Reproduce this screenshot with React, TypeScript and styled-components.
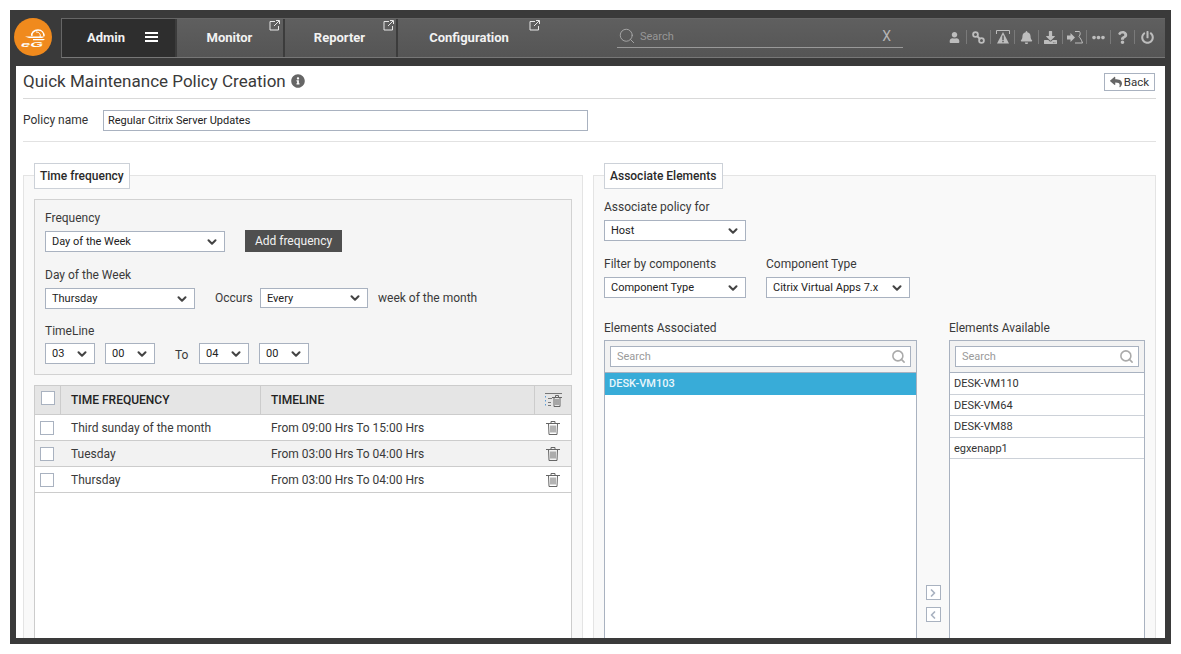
import styled, { createGlobalStyle } from "styled-components";
import {
  FaBell,
  FaDownload,
  FaEllipsisH,
  FaInfoCircle,
  FaPowerOff,
  FaQuestion,
  FaReply,
  FaUser,
} from "react-icons/fa";
import { ChevronDown, ChevronLeft, ChevronRight, Search as SearchGlass } from "lucide-react";

const GlobalStyle = createGlobalStyle`
  html, body {
    margin: 0;
    background: #fff;
    font-family: Roboto, "Liberation Sans", sans-serif;
    color: #333;
  }
  * { box-sizing: border-box; }
`;

const Page = styled.div`
  padding: 10px;
`;

const Frame = styled.div`
  width: 1161px;
  height: 634px;
  background: #3a3a3a;
  border: solid #3a3a3a;
  border-width: 0 6px 6px;
  display: flex;
  flex-direction: column;
`;

/* ---- top bar ---- */
const Header = styled.header`
  height: 56px;
  padding-top: 8px;
  display: flex;
  flex: none;
`;

const LogoSlot = styled.div`
  width: 47px;
  flex: none;
  margin-left: -2px;
`;

const NavBar = styled.nav`
  flex: 1;
  height: 40px;
  display: flex;
  background: linear-gradient(#5f5f5f, #555);
  border: 1px solid #666;
  border-right: none;
  border-bottom-color: #777;
`;

const Tab = styled.a<{ $w: number; $active?: boolean; $last?: boolean; $nudge?: number }>`
  position: relative;
  width: ${(p) => p.$w}px;
  flex: none;
  display: flex;
  align-items: center;
  justify-content: center;
  gap: 20px;
  padding: 0 ${(p) => p.$nudge ?? 0}px 2px ${(p) => (p.$active ? 8 : 0)}px;
  font-size: 13px;
  font-weight: 700;
  color: #f2f2f2;
  border-right: ${(p) => (p.$last ? "none" : "2px solid #3c3c3c")};
  background: ${(p) => (p.$active ? "#2e2e2e" : "transparent")};
`;

const ExternalMark = styled.svg<{ $right: number }>`
  position: absolute;
  top: 1px;
  right: ${(p) => p.$right}px;
  width: 11px;
  height: 11px;
`;

const Hamburger = styled.span`
  width: 13px;
  height: 10px;
  border-top: 2px solid #fff;
  border-bottom: 2px solid #fff;
  position: relative;
  &::after {
    content: "";
    position: absolute;
    left: 0;
    right: 0;
    top: 2px;
    height: 2px;
    background: #fff;
  }
`;

const SearchBar = styled.div`
  width: 286px;
  height: 27px;
  margin: 2px 0 0 76px;
  display: flex;
  align-items: center;
  padding: 3px 12px 0 1px;
  border-bottom: 1px solid #999;
  color: #aaa;
  font-size: 11px;
`;

const SearchHint = styled.span`
  flex: 1;
  margin-left: 4px;
  padding-top: 1px;
  color: #979797;
`;

const ClearMark = styled.span`
  font-size: 14px;
  color: #b5b5b5;
`;

const ToolIcons = styled.div`
  margin-left: auto;
  margin-right: 6px;
  padding-bottom: 2px;
  display: flex;
  align-items: center;
`;

const ToolIcon = styled.span`
  width: 24px;
  height: 14px;
  display: flex;
  align-items: center;
  justify-content: center;
  color: #bdbdbd;
  border-right: 1px solid #7a7a7a;
  &:last-child {
    border-right: none;
  }
`;

/* ---- page ---- */
const Main = styled.main`
  flex: 1;
  min-height: 0;
  background: #fff;
  padding: 0 9px 0 7px;
  display: flex;
  flex-direction: column;
  overflow: hidden;
`;

const TitleRow = styled.div`
  height: 33px;
  flex: none;
  display: flex;
  align-items: center;
  padding-bottom: 3px;
  border-bottom: 1px solid #d9d9d9;
`;

const Title = styled.h1`
  margin: 0;
  font-size: 17px;
  font-weight: 400;
  color: #3a3a3a;
`;

const InfoIcon = styled(FaInfoCircle)`
  margin-left: 5px;
  color: #666;
  font-size: 14px;
`;

const BackButton = styled.button`
  margin: 2px 1px 0 auto;
  width: 51px;
  height: 18px;
  padding: 0;
  background: #fff;
  border: 1px solid #a9b2c0;
  display: flex;
  align-items: center;
  justify-content: center;
  gap: 2px;
  font: 11.5px Roboto, sans-serif;
  color: #333;
  svg {
    color: #666;
    font-size: 12px;
  }
`;

const PolicyRow = styled.div`
  height: 43px;
  flex: none;
  padding-top: 11px;
  display: flex;
  border-bottom: 1px solid #e2e2e2;
`;

const PolicyLabel = styled.label`
  width: 80px;
  font-size: 12px;
  line-height: 21px;
`;

const PolicyInput = styled.div`
  width: 485px;
  height: 21px;
  padding-left: 4px;
  border: 1px solid #a9b2c0;
  font-size: 11px;
  line-height: 19px;
  color: #222;
`;

const Columns = styled.div`
  flex: 1;
  min-height: 0;
  margin-top: 33px;
  display: grid;
  grid-template-columns: 560px 563px;
  gap: 10px;
`;

const Panel = styled.section`
  min-height: 0;
  background: #f9f9f9;
  border: 1px solid #e4e4e4;
  border-bottom: none;
  padding: 0 10px;
  display: flex;
  flex-direction: column;
`;

const Legend = styled.h2<{ $w: number }>`
  align-self: flex-start;
  width: ${(p) => p.$w}px;
  height: 26px;
  margin: -13px 0 0;
  padding: 0 5px;
  background: #fff;
  border: 1px solid #ccd1d8;
  font-size: 12px;
  font-weight: 500;
  line-height: 24px;
  color: #2a2a2a;
`;

const FrequencyBox = styled.div`
  height: 176px;
  flex: none;
  margin-top: 10px;
  padding: 10px 10px 0;
  border: 1px solid #d2d2d2;
  background: #f5f5f5;
`;

const FieldLabel = styled.div<{ $top?: number; $bottom?: number }>`
  height: 14px;
  margin-top: ${(p) => p.$top ?? 0}px;
  margin-bottom: ${(p) => p.$bottom ?? 7}px;
  font-size: 12px;
  line-height: 16px;
  color: #3a3a3a;
`;

const FieldRow = styled.div`
  display: flex;
  align-items: flex-start;
`;

const SelectBox = styled.div<{ $w: number; $left?: number; $h?: number }>`
  width: ${(p) => p.$w}px;
  height: ${(p) => p.$h ?? 21}px;
  margin-left: ${(p) => p.$left ?? 0}px;
  flex: none;
  padding: 0 5px 0 6px;
  background: #fff;
  border: 1px solid #a9b2c0;
  display: flex;
  align-items: center;
  justify-content: space-between;
  font-size: 11px;
  color: #222;
  svg {
    flex: none;
    color: #444;
  }
`;

const AddButton = styled.button`
  width: 97px;
  height: 22px;
  margin: -1px 0 0 20px;
  padding: 0;
  background: #4f4f4f;
  border: none;
  color: #f2f2f2;
  font: 12px Roboto, sans-serif;
`;

const InlineText = styled.span<{ $left: number; $w?: number; $top?: number }>`
  margin-left: ${(p) => p.$left}px;
  width: ${(p) => (p.$w ? `${p.$w}px` : "auto")};
  padding-top: ${(p) => p.$top ?? 3}px;
  flex: none;
  font-size: 12px;
  line-height: 14px;
  color: #3a3a3a;
`;

/* ---- table ---- */
const TableBox = styled.div`
  flex: 1;
  margin-top: 10px;
  background: #fff;
  border: 1px solid #ccc;
  border-bottom: none;
`;

const TableHead = styled.div`
  height: 29px;
  display: grid;
  grid-template-columns: 26px 200px 274px 37px;
  background: #e5e5e5;
  border-bottom: 1px solid #ccc;
`;

const HeadCell = styled.div`
  display: flex;
  align-items: center;
  padding-left: 10px;
  border-right: 1px solid #ccc;
  font-size: 12px;
  font-weight: 500;
  color: #222;
  &:first-child {
    padding-left: 6px;
  }
  &:last-child {
    border-right: none;
    padding-left: 10px;
  }
`;

const TableRow = styled.div<{ $alt?: boolean }>`
  height: 26px;
  display: grid;
  grid-template-columns: 26px 200px 274px 37px;
  align-items: center;
  background: ${(p) => (p.$alt ? "#f2f2f2" : "#fff")};
  border-bottom: 1px solid #ccc;
  font-size: 12px;
  color: #3a3a3a;
`;

const CheckBox = styled.span<{ $head?: boolean }>`
  display: block;
  width: 14px;
  height: 14px;
  margin: ${(p) => (p.$head ? "-4px 0 0 0" : "0 0 0 5px")};
  background: #fff;
  border: 1px solid #a9b2c0;
`;

const RowCell = styled.span`
  padding-left: 10px;
`;

const TrashCell = styled.span`
  display: flex;
  padding: 1px 0 0 11px;
`;

/* ---- transfer lists ---- */
const TransferRow = styled.div`
  flex: 1;
  min-height: 0;
  margin-top: 22px;
  display: flex;
`;

const ListColumn = styled.div<{ $w: number }>`
  width: ${(p) => p.$w}px;
  flex: none;
  display: flex;
  flex-direction: column;
`;

const ListBox = styled.div`
  flex: 1;
  background: #fff;
  border: 1px solid #a9b2c0;
  border-bottom: none;
`;

const ListSearch = styled.div`
  height: 32px;
  padding: 5px;
  background: #f2f2f2;
  border-bottom: 1px solid #a9b2c0;
`;

const ListSearchInput = styled.div`
  height: 21px;
  padding: 0 4px 0 6px;
  background: #fff;
  border: 1px solid #a9b2c0;
  display: flex;
  align-items: center;
  justify-content: space-between;
  font-size: 11px;
  color: #9a9a9a;
  svg {
    color: #aaa;
  }
`;

const ListItem = styled.div<{ $selected?: boolean }>`
  height: 21.5px;
  padding-left: 4px;
  font-size: 11px;
  line-height: 22px;
  font-weight: ${(p) => (p.$selected ? 500 : 400)};
  color: ${(p) => (p.$selected ? "#e9f6fb" : "#333")};
  background: ${(p) => (p.$selected ? "#38acd8" : "#fff")};
  border-bottom: 1px solid ${(p) => (p.$selected ? "#38acd8" : "#ccd1d8")};
`;

const MoveColumn = styled.div`
  width: 32px;
  flex: none;
  padding-top: 265px;
  display: flex;
  flex-direction: column;
  align-items: center;
  gap: 7px;
`;

const MoveButton = styled.button`
  width: 15px;
  height: 15px;
  padding: 0;
  background: #fff;
  border: 1px solid #a9b2c0;
  display: flex;
  align-items: center;
  justify-content: center;
  color: #a9b2c0;
`;

const LogoMark = () => (
  <svg width="38" height="38" viewBox="0 0 38 38">
    <circle cx="19" cy="19" r="19" fill="#f08a1d" />
    <path d="M18 18c-1-3 2-6 6-6 4 0 6 3 6 6" fill="none" stroke="#fff" strokeWidth="1.5" />
    <path d="M22 14c3 0 5 2 4 5" fill="none" stroke="#fff" strokeWidth="1" />
    <path d="M11 18.500h20l-3 1.600H15z" fill="#fff" />
    <path d="M19 21h12l-1.500 1.200H19z" fill="#fff" />
    <text
      x="7"
      y="28.500"
      fontFamily="Liberation Sans, sans-serif"
      fontStyle="italic"
      fontWeight="700"
      fontSize="8"
      textLength="22"
      lengthAdjust="spacingAndGlyphs"
      fill="#fff"
    >
      eG
    </text>
  </svg>
);

const External = ({ right = 3 }: { right?: number }) => (
  <ExternalMark $right={right} viewBox="0 0 11 11" fill="none" stroke="#e6e6e6" strokeWidth="1">
    <path d="M6 1.500H1v8.500h8.500V6" />
    <path d="M5 6l5-5M7 .5h3.500V4" />
  </ExternalMark>
);

const TrashIcon = () => (
  <svg width="14" height="14" viewBox="0 0 14 14" fill="none" stroke="#666" strokeWidth="1">
    <path d="M0 2.500h14M5 2.500V.5h4v2M2.500 2.500l.5 11h8l.5-11M5 4.500v7M7 4.500v7M9 4.500v7" />
  </svg>
);

const BulkTrashIcon = () => (
  <svg width="17" height="14" viewBox="0 0 17 14" fill="none" strokeWidth="1">
    <path d="M0 .5h17M3 5.500h4M3 9.500h3M3 12.500h3" stroke="#777" />
    <path d="M.5 3v10" stroke="#5b9bd5" strokeDasharray="1.500 2.500" />
    <path d="M7 4.500h10M9 4.500v9h6v-9M11 6v6M13 6v6M10.500 4.500V2.500h3v2" stroke="#666" />
  </svg>
);

const AlertBoxIcon = () => (
  <svg width="14" height="14" viewBox="0 0 14 14">
    <path d="M.5 4V.5h13V4" fill="none" stroke="#bdbdbd" />
    <path d="M7 2l6 11.500H1z" fill="#bdbdbd" />
    <path d="M6.300 5.500h1.400v4.500H6.300zM6.300 10.800h1.400v1.400H6.300z" fill="#555" />
  </svg>
);

const RingsIcon = () => (
  <svg width="13" height="13" viewBox="0 0 13 13" fill="none" stroke="#bdbdbd" strokeWidth="1.800">
    <circle cx="3.500" cy="3.500" r="2.400" />
    <circle cx="9.500" cy="9.500" r="2.400" />
    <path d="M5 5l3 3" />
  </svg>
);

const SignInPersonIcon = () => (
  <svg width="16" height="13" viewBox="0 0 16 13">
    <path d="M0 4.500h3.500V2l4.500 4.500L3.500 11V8.500H0z" fill="#bdbdbd" />
    <path d="M8 .5h4.500c1 1.500 1 3-.5 5 1 1.500 2.500 3 3.500 6.500H8" fill="none" stroke="#bdbdbd" />
  </svg>
);

const Dropdown = ({ text, w, left, h }: { text: string; w: number; left?: number; h?: number }) => (
  <SelectBox $w={w} $left={left} $h={h}>
    {text}
    <ChevronDown size={14} strokeWidth={3.5} />
  </SelectBox>
);

const rows = [
  { name: "Third sunday of the month", time: "From 09:00 Hrs To 15:00 Hrs" },
  { name: "Tuesday", time: "From 03:00 Hrs To 04:00 Hrs" },
  { name: "Thursday", time: "From 03:00 Hrs To 04:00 Hrs" },
];

const available = ["DESK-VM110", "DESK-VM64", "DESK-VM88", "egxenapp1"];

export default function App() {
  return (
    <Page>
      <GlobalStyle />
      <Frame>
        <Header>
          <LogoSlot>
            <LogoMark />
          </LogoSlot>
          <NavBar>
            <Tab $w={115} $active>
              Admin
              <Hamburger />
            </Tab>
            <Tab $w={108} $nudge={1}>
              Monitor
              <External />
            </Tab>
            <Tab $w={113} $nudge={2}>
              Reporter
              <External right={2} />
            </Tab>
            <Tab $w={143} $last $nudge={1}>
              Configuration
              <External right={1} />
            </Tab>
            <SearchBar>
              <SearchGlass size={18} strokeWidth={1.2} />
              <SearchHint>Search</SearchHint>
              <ClearMark>X</ClearMark>
            </SearchBar>
            <ToolIcons>
              <ToolIcon><FaUser size={11} /></ToolIcon>
              <ToolIcon><RingsIcon /></ToolIcon>
              <ToolIcon><AlertBoxIcon /></ToolIcon>
              <ToolIcon><FaBell size={13} /></ToolIcon>
              <ToolIcon><FaDownload size={13} /></ToolIcon>
              <ToolIcon><SignInPersonIcon /></ToolIcon>
              <ToolIcon><FaEllipsisH size={13} /></ToolIcon>
              <ToolIcon><FaQuestion size={13} /></ToolIcon>
              <ToolIcon><FaPowerOff size={13} /></ToolIcon>
            </ToolIcons>
          </NavBar>
        </Header>
        <Main>
          <TitleRow>
            <Title>Quick Maintenance Policy Creation</Title>
            <InfoIcon />
            <BackButton>
              <FaReply />
              Back
            </BackButton>
          </TitleRow>
          <PolicyRow>
            <PolicyLabel>Policy name</PolicyLabel>
            <PolicyInput>Regular Citrix Server Updates</PolicyInput>
          </PolicyRow>
          <Columns>
            <Panel>
              <Legend $w={96}>Time frequency</Legend>
              <FrequencyBox>
                <FieldLabel>Frequency</FieldLabel>
                <FieldRow>
                  <Dropdown text="Day of the Week" w={180} />
                  <AddButton>Add frequency</AddButton>
                </FieldRow>
                <FieldLabel $top={15}>Day of the Week</FieldLabel>
                <FieldRow>
                  <Dropdown text="Thursday" w={150} />
                  <InlineText $left={20} $w={45}>Occurs</InlineText>
                  <Dropdown text="Every" w={108} h={20} />
                  <InlineText $left={10}>week of the month</InlineText>
                </FieldRow>
                <FieldLabel $top={14} $bottom={6}>TimeLine</FieldLabel>
                <FieldRow>
                  <Dropdown text="03" w={50} />
                  <Dropdown text="00" w={50} left={10} />
                  <InlineText $left={20} $w={24} $top={5}>To</InlineText>
                  <Dropdown text="04" w={50} />
                  <Dropdown text="00" w={50} left={10} />
                </FieldRow>
              </FrequencyBox>
              <TableBox>
                <TableHead>
                  <HeadCell><CheckBox $head /></HeadCell>
                  <HeadCell>TIME FREQUENCY</HeadCell>
                  <HeadCell>TIMELINE</HeadCell>
                  <HeadCell><BulkTrashIcon /></HeadCell>
                </TableHead>
                {rows.map((row, i) => (
                  <TableRow key={row.name} $alt={i === 1}>
                    <CheckBox />
                    <RowCell>{row.name}</RowCell>
                    <RowCell>{row.time}</RowCell>
                    <TrashCell><TrashIcon /></TrashCell>
                  </TableRow>
                ))}
              </TableBox>
            </Panel>
            <Panel>
              <Legend $w={119}>Associate Elements</Legend>
              <FieldLabel $top={10} $bottom={7}>Associate policy for</FieldLabel>
              <Dropdown text="Host" w={142} />
              <FieldRow>
                <ListColumn $w={162}>
                  <FieldLabel $top={15} $bottom={7}>Filter by components</FieldLabel>
                  <Dropdown text="Component Type" w={142} />
                </ListColumn>
                <ListColumn $w={144}>
                  <FieldLabel $top={15} $bottom={7}>Component Type</FieldLabel>
                  <Dropdown text="Citrix Virtual Apps 7.x" w={144} />
                </ListColumn>
              </FieldRow>
              <TransferRow>
                <ListColumn $w={313}>
                  <FieldLabel $bottom={6}>Elements Associated</FieldLabel>
                  <ListBox>
                    <ListSearch>
                      <ListSearchInput>
                        Search
                        <SearchGlass size={15} strokeWidth={2.5} />
                      </ListSearchInput>
                    </ListSearch>
                    <ListItem $selected>DESK-VM103</ListItem>
                  </ListBox>
                </ListColumn>
                <MoveColumn>
                  <MoveButton><ChevronRight size={12} strokeWidth={3.5} /></MoveButton>
                  <MoveButton><ChevronLeft size={12} strokeWidth={3.5} /></MoveButton>
                </MoveColumn>
                <ListColumn $w={196}>
                  <FieldLabel $bottom={6}>Elements Available</FieldLabel>
                  <ListBox>
                    <ListSearch>
                      <ListSearchInput>
                        Search
                        <SearchGlass size={15} strokeWidth={2.5} />
                      </ListSearchInput>
                    </ListSearch>
                    {available.map((name) => (
                      <ListItem key={name}>{name}</ListItem>
                    ))}
                  </ListBox>
                </ListColumn>
              </TransferRow>
            </Panel>
          </Columns>
        </Main>
      </Frame>
    </Page>
  );
}
